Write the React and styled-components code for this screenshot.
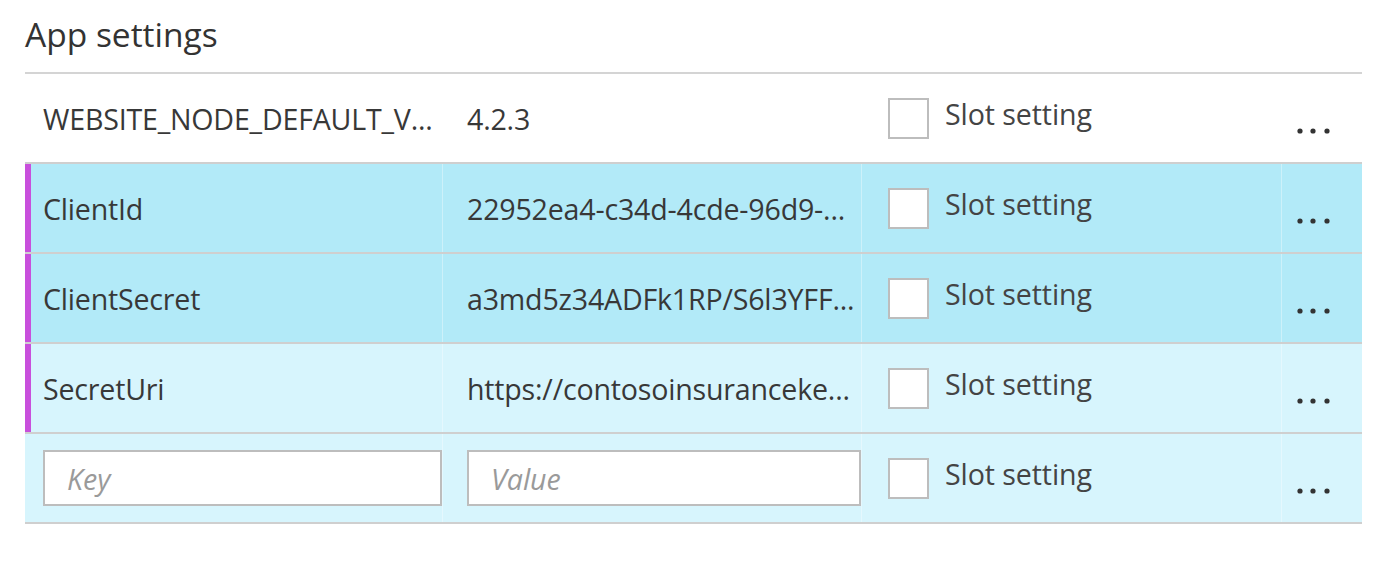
import styled, { createGlobalStyle } from 'styled-components';

const GlobalStyle = createGlobalStyle`
  body {
    margin: 0;
    background: #fff;
    font-family: "Open Sans", "Noto Sans", sans-serif;
    color: #333;
  }
`;

const Panel = styled.section`
  padding: 12px 20px 0 25px;
`;

const Title = styled.h1`
  margin: 0;
  font-size: 33.5px;
  font-weight: 400;
  line-height: 44px;
  color: #333;
  padding-bottom: 16px;
  border-bottom: 2px solid #d4d4d4;
`;

const Row = styled.div`
  display: grid;
  grid-template-columns: 418px 419px 420px 80px;
  height: 90px;
  border-bottom: 2px solid #cfcfcf;
  box-sizing: border-box;
  background: ${(p) => p.bg};
`;

const Cell = styled.div`
  display: flex;
  align-items: center;
  min-width: 0;
  box-sizing: border-box;
  padding-left: ${(p) => p.pl || 0}px;
  border-right: 1px solid ${(p) => (p.divider ? 'rgba(255,255,255,0.35)' : 'transparent')};
`;

const KeyCell = styled(Cell)`
  border-left: 6px solid ${(p) => (p.accent ? '#c84fdc' : 'transparent')};
`;

const Text = styled.span`
  font-size: 28.6px;
  white-space: nowrap;
  letter-spacing: -0.2px;
  color: #383838;
`;

const SlotWrap = styled.label`
  display: flex;
  align-items: center;
  gap: 16px;
  font-size: 28.6px;
  letter-spacing: -0.1px;
  color: #444;
`;

const Box = styled.span`
  width: 41px;
  height: 41px;
  box-sizing: border-box;
  border: 2px solid #bdbdbd;
  background: #fff;
`;

const SlotLabel = styled.span`
  position: relative;
  top: -5px;
`;

const More = styled.div`
  display: flex;
  align-items: center;
  padding-left: 15px;
  padding-top: 26px;
  color: #333;
`;

const Input = styled.input`
  box-sizing: border-box;
  height: 56px;
  width: ${(p) => p.w}px;
  border: 2px solid #bdbdbd;
  background: #fff;
  font-family: inherit;
  font-size: 28.6px;
  padding: 0 0 0 22px;
  outline: none;
  &::placeholder {
    color: #9a9a9a;
    font-style: italic;
  }
`;

const Dots = () => (
  <svg width="36" height="8" viewBox="0 0 36 8">
    <circle cx="3" cy="4" r="2.6" fill="#333" />
    <circle cx="16" cy="4" r="2.6" fill="#333" />
    <circle cx="30" cy="4" r="2.6" fill="#333" />
  </svg>
);

const Slot = () => (
  <SlotWrap>
    <Box />
    <SlotLabel>Slot setting</SlotLabel>
  </SlotWrap>
);

const settings = [
  { key: 'WEBSITE_NODE_DEFAULT_V...', value: '4.2.3', bg: '#ffffff' },
  { key: 'ClientId', value: '22952ea4-c34d-4cde-96d9-...', bg: '#b2eaf8', accent: true },
  { key: 'ClientSecret', value: 'a3md5z34ADFk1RP/S6l3YFF...', bg: '#b2eaf8', accent: true },
  { key: 'SecretUri', value: 'https://contosoinsuranceke...', bg: '#d7f5fd', accent: true },
];

export default function App() {
  return (
    <>
      <GlobalStyle />
      <Panel>
        <Title>App settings</Title>
        {settings.map((s) => (
          <Row key={s.key} bg={s.bg}>
            <KeyCell pl={12} accent={s.accent} divider={s.accent}>
              <Text>{s.key}</Text>
            </KeyCell>
            <Cell pl={24} divider={s.accent}>
              <Text>{s.value}</Text>
            </Cell>
            <Cell pl={26} divider={s.accent}>
              <Slot />
            </Cell>
            <More>
              <Dots />
            </More>
          </Row>
        ))}
        <Row bg="#d7f5fd">
          <KeyCell pl={12} divider>
            <Input w={399} placeholder="Key" />
          </KeyCell>
          <Cell pl={24} divider>
            <Input w={395} placeholder="Value" />
          </Cell>
          <Cell pl={26} divider>
            <Slot />
          </Cell>
          <More>
            <Dots />
          </More>
        </Row>
      </Panel>
    </>
  );
}
